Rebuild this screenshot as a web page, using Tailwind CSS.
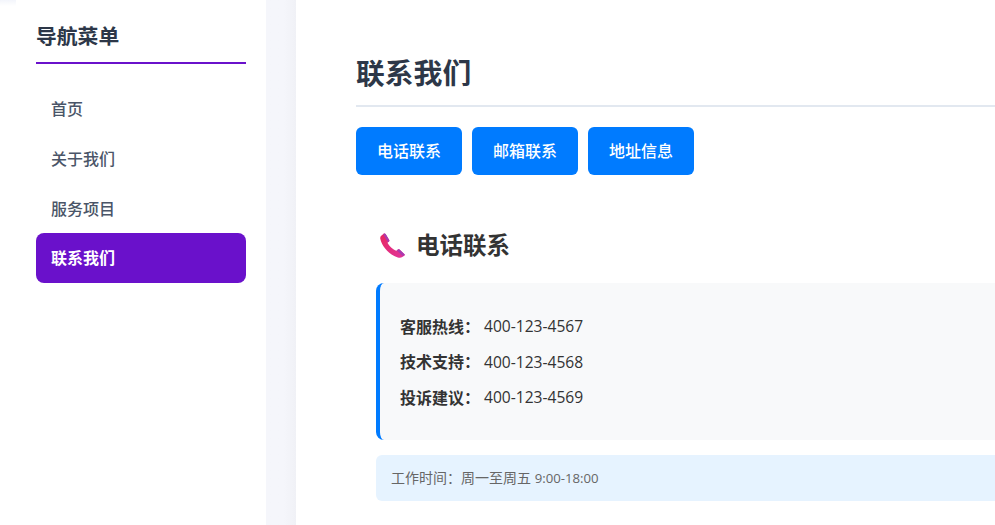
<!DOCTYPE html>
<html lang="zh-CN">
<head>
    <meta charset="UTF-8">
    <meta name="viewport" content="width=device-width, initial-scale=1.0">
    <title>联系我们</title>
    <script src="https://cdn.jsdelivr.net/npm/@tailwindcss/browser@4"></script>
</head>
<body class="bg-white overflow-hidden font-['Open_Sans','Noto_Sans_CJK_SC',sans-serif]">
    <div class="flex h-[525px] w-full">
        <!-- Left strip, only tinted behind the sidebar corner -->
        <div class="w-4 shrink-0 bg-linear-to-b from-[#f3f5fb] to-white to-[6px]"></div>

        <!-- Sidebar -->
        <aside class="h-full w-[250px] shrink-0 rounded-t-xl bg-white px-5">
            <h3 class="h-[64px] border-b-2 border-[#6a11cb] pt-[21px] text-[20.8px] leading-[31px] font-semibold text-[#2d3748]">导航菜单</h3>
            <nav class="mt-[19px] flex flex-col text-[16px] font-medium text-[#4a5568]">
                <a class="flex h-[50px] items-center rounded-lg px-[15px] pt-0.5">首页</a>
                <a class="flex h-[50px] items-center rounded-lg px-[15px] pt-0.5">关于我们</a>
                <a class="flex h-[50px] items-center rounded-lg px-[15px] pt-0.5">服务项目</a>
                <a class="flex h-[50px] items-center rounded-lg bg-[#6a11cb] px-[15px] font-semibold text-white">联系我们</a>
            </nav>
        </aside>

        <!-- Gutter between the two panels -->
        <div class="w-[30px] shrink-0 bg-linear-to-r from-[#f5f6fb] from-60% to-[#f0f1f6]"></div>

        <!-- Main content, cut off by the right edge of the window -->
        <main class="h-full min-w-0 flex-1 rounded-tl-xl bg-white pt-[50px] pl-[60px]">
            <h1 class="h-[57px] border-b-2 border-[#e2e8f0] text-[28.8px] leading-[46px] font-semibold text-[#2d3748]">联系我们</h1>

            <div class="mt-5 flex gap-[10px]">
                <button class="h-12 w-[106px] rounded-md bg-[#007bff] text-[16px] font-medium text-white">电话联系</button>
                <button class="h-12 w-[106px] rounded-md bg-[#007bff] text-[16px] font-medium text-white">邮箱联系</button>
                <button class="h-12 w-[106px] rounded-md bg-[#007bff] text-[16px] font-medium text-white">地址信息</button>
            </div>

            <section class="mt-[52px] pl-5">
                <h2 class="flex h-9 items-center gap-[11px] pl-1 text-[23.5px] font-semibold text-[#333333]">
                    <svg class="h-[25px] w-[25px]" viewBox="0 0 25 25">
                        <defs>
                            <linearGradient id="phone" x1="0" y1="0" x2="1" y2="1">
                                <stop offset="0" stop-color="#e8265f"/>
                                <stop offset="1" stop-color="#e0359c"/>
                            </linearGradient>
                        </defs>
                        <path fill="url(#phone)" d="M4 .6 1.500 2.400C.4 3.200 0 4.400.3 5.800 1.800 13.600 9.800 22.400 17.800 24.400c1.700.4 3.300.3 4.500-.3l2-1.300c.6-.4.7-1.100.2-1.600l-5-4.600c-.5-.4-1.100-.4-1.600 0l-1.600 1.200C13.200 17 8.600 12.400 7.500 9.800l1.500-1.400c.4-.4.5-1 .2-1.500L5.600 1c-.4-.6-1-.8-1.600-.4Z"/>
                        <path fill="#a83bb0" d="M4 .6c.6-.4 1.200-.2 1.600.4l3.600 5.900c.3.5.2 1.100-.2 1.500L8 9.300 3.200 1.200Z"/>
                        <path fill="#a83bb0" d="m24.500 21.200-5-4.600c-.5-.4-1.100-.4-1.600 0l-1 .8 5.900 5.600 1.500-1c.6-.4.700-.3.200-.8Z"/>
                    </svg>
                    <span class="pt-0.5">电话联系</span>
                </h2>

                <div class="mt-5 h-[157px] rounded-l-lg border-l-4 border-[#007bff] bg-[#f8f9fa] pt-[26px] pl-5 text-[15.6px] text-[#333333]">
                    <p class="flex h-[35.5px] items-center"><strong class="w-[84px] text-[16px] font-semibold">客服热线：</strong>400-123-4567</p>
                    <p class="flex h-[35.5px] items-center"><strong class="w-[84px] text-[16px] font-semibold">技术支持：</strong>400-123-4568</p>
                    <p class="flex h-[35.5px] items-center"><strong class="w-[84px] text-[16px] font-semibold">投诉建议：</strong>400-123-4569</p>
                </div>

                <div class="mt-[15px] flex h-[46px] items-center rounded-l-md bg-[#e6f3ff] pl-[15px] text-[14px] text-[#666666]"><span>工作时间：周一至周五&nbsp;<span class="text-[13.2px]">9:00-18:00</span></span></div>
            </section>
        </main>
    </div>
</body>
</html>
